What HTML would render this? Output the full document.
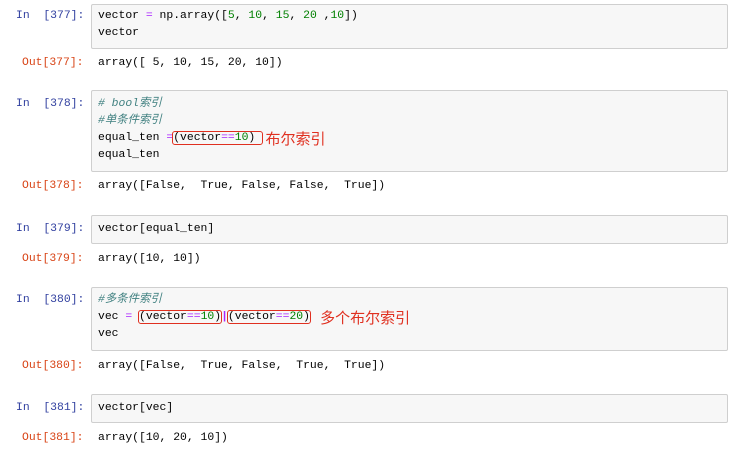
<!DOCTYPE html><html><head><style>
body{margin:0;width:741px;height:464px;background:#fff;position:relative;font-family:"Liberation Mono",monospace;font-size:11.4px;overflow:hidden}
.box{position:absolute;left:91px;width:635px;background:#f7f7f7;border:1px solid #cfcfcf;border-radius:2px}
.t{position:absolute;white-space:pre;line-height:17px}
.t div{height:17px;line-height:17px;overflow:visible}
.in{color:#303f9f;left:16px}
.out{color:#d84315;left:22px}
.c{left:98px;color:#000}
.g{color:#008000}.p{color:#aa22ff}.cm{color:#408080;font-style:italic;font-family:"Liberation Mono","Noto Sans CJK SC",monospace}
.r{outline:1.5px solid #e03020;border-radius:2px}
.red{color:#e03020;font-family:"Noto Sans CJK SC",sans-serif;font-size:15px;display:inline-block;height:17px;line-height:17px;vertical-align:top}
</style></head><body>
<div class="box" style="top:4px;height:43px"></div>
<div class="t in" style="top:8px">In  [377]:</div>
<div class="t c" style="top:8px"><div>vector <span class="p">=</span> np.array([<span class="g">5</span>, <span class="g">10</span>, <span class="g">15</span>, <span class="g">20</span> ,<span class="g">10</span>])</div><div>vector</div></div>
<div class="t out" style="top:55px">Out[377]:</div>
<div class="t c" style="top:55px">array([ 5, 10, 15, 20, 10])</div>

<div class="box" style="top:90px;height:80px"></div>
<div class="t in" style="top:96px">In  [378]:</div>
<div class="t c" style="top:96px"><div class="cm"># bool索引</div><div class="cm">#单条件索引</div><div>equal_ten <span class="p">=</span><span class="r">(vector<span class="p">==</span><span class="g">10</span>) </span><span class="red"> 布尔索引</span></div><div>equal_ten</div></div>
<div class="t out" style="top:178px">Out[378]:</div>
<div class="t c" style="top:178px">array([False,  True, False, False,  True])</div>

<div class="box" style="top:215px;height:27px"></div>
<div class="t in" style="top:221px">In  [379]:</div>
<div class="t c" style="top:221px">vector[equal_ten]</div>
<div class="t out" style="top:251px">Out[379]:</div>
<div class="t c" style="top:251px">array([10, 10])</div>

<div class="box" style="top:287px;height:62px"></div>
<div class="t in" style="top:292px">In  [380]:</div>
<div class="t c" style="top:292px"><div class="cm">#多条件索引</div><div>vec <span class="p">=</span> <span class="r">(vector<span class="p">==</span><span class="g">10</span>)</span><span class="p" style="font-weight:bold">|</span><span class="r">(vector<span class="p">==</span><span class="g">20</span>)</span> <span class="red"> 多个布尔索引</span></div><div>vec</div></div>
<div class="t out" style="top:358px">Out[380]:</div>
<div class="t c" style="top:358px">array([False,  True, False,  True,  True])</div>

<div class="box" style="top:394px;height:27px"></div>
<div class="t in" style="top:400px">In  [381]:</div>
<div class="t c" style="top:400px">vector[vec]</div>
<div class="t out" style="top:430px">Out[381]:</div>
<div class="t c" style="top:430px">array([10, 20, 10])</div>
</body></html>
